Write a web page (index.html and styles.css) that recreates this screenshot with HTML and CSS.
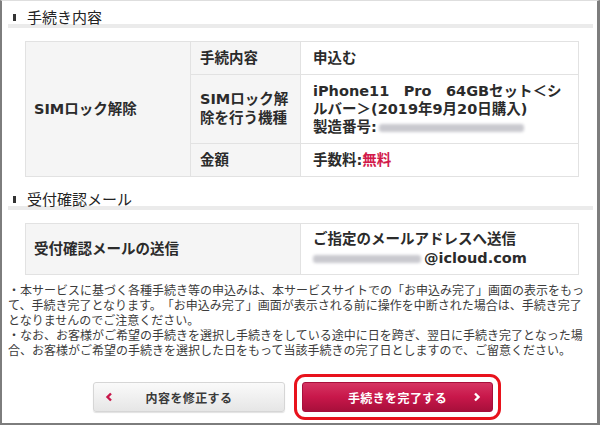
FILE: index.html
```html
<!DOCTYPE html>
<html lang="ja">
<head>
    <meta charset="UTF-8">
    <meta name="viewport" content="width=device-width, initial-scale=1.0">
    <title>手続き内容の確認</title>
    <link rel="stylesheet" href="styles.css">
</head>
<body>
    <div class="page">
        <h2 class="section-title">手続き内容</h2>
        <table class="detail-table">
            <colgroup>
                <col class="col-group">
                <col class="col-item">
                <col class="col-value">
            </colgroup>
            <tr class="row-short">
                <th class="group" rowspan="3">SIMロック解除</th>
                <th>手続内容</th>
                <td>申込む</td>
            </tr>
            <tr class="row-tall">
                <th>SIMロック解除を行う機種</th>
                <td>iPhone11　Pro　64GBセット＜シルバー＞(2019年9月20日購入)<br>製造番号:<span class="masked serial"></span></td>
            </tr>
            <tr class="row-short">
                <th>金額</th>
                <td>手数料:<span class="free">無料</span></td>
            </tr>
        </table>

        <h2 class="section-title">受付確認メール</h2>
        <table class="detail-table">
            <colgroup>
                <col class="col-wide">
                <col class="col-value">
            </colgroup>
            <tr class="row-mail">
                <th class="group">受付確認メールの送信</th>
                <td>ご指定のメールアドレスへ送信<br><span class="masked mail"></span>@icloud.com</td>
            </tr>
        </table>

        <div class="notes">
            <p>・本サービスに基づく各種手続き等の申込みは、本サービスサイトでの「お申込み完了」画面の表示をもって、手続き完了となります。「お申込み完了」画面が表示される前に操作を中断された場合は、手続き完了<span class="phrase">となりません</span>のでご注意ください。</p>
            <p>・なお、お客様がご希望の手続きを選択し手続きをしている途中に日を跨ぎ、翌日に手続き完了となった場合、お客様がご希望の手続きを選択した日をもって当該手続きの完了日としますので、ご留意ください。</p>
        </div>

        <div class="actions">
            <button class="btn btn-back" type="button">
                <svg class="chevron" width="8" height="10" viewBox="0 0 8 10"><path d="M6 1.5 L2.5 5 L6 8.5" fill="none" stroke="currentColor" stroke-width="2.4"/></svg>
                <span class="btn-label">内容を修正する</span>
                <span class="chevron-space"></span>
            </button>
            <button class="btn btn-submit" type="button">
                <span class="chevron-space"></span>
                <span class="btn-label">手続きを完了する</span>
                <svg class="chevron" width="8" height="10" viewBox="0 0 8 10"><path d="M2 1.5 L5.5 5 L2 8.5" fill="none" stroke="currentColor" stroke-width="2.4"/></svg>
            </button>
        </div>
    </div>
</body>
</html>
```

FILE: styles.css
```css
:root {
    --text: #2b2b2b;
    --text-note: #3c3c3c;
    --border: #e2e2e2;
    --cell-bg: #f5f5f5;
    --frame: #7d7d7d;
    --accent: #c8174a;
    --accent-dark: #a80f3b;
    --highlight: #e8121c;
}

* {
    box-sizing: border-box;
    margin: 0;
    padding: 0;
}

body {
    font-family: 'DejaVu Sans', 'Noto Sans CJK JP', sans-serif;
    color: var(--text);
    background-color: #ffffff;
}

.page {
    width: 600px;
    height: 425px;
    border-top: 1px solid #dedede;
    border-left: 2px solid var(--frame);
    border-right: 3px solid var(--frame);
    border-bottom: 2px solid var(--frame);
    padding: 0 4px 0 6px;
}

/* section headings */
.section-title {
    font-family: 'Noto Sans CJK JP', sans-serif;
    font-size: 15px;
    font-weight: 400;
    line-height: 14px;
    padding: 9px 0 0 5px;
    border-bottom: 4px solid #ebebeb;
    display: flex;
    align-items: center;
    color: #222222;
}

.section-title::before {
    content: '';
    width: 3px;
    height: 7px;
    background-color: #333333;
    margin-right: 11px;
}

.section-title + .detail-table {
    margin-top: 13px;
}

.detail-table + .section-title {
    margin-top: 6px;
}

/* tables */
.detail-table {
    margin-left: 17px;
    width: 553px;
    border-collapse: collapse;
    table-layout: fixed;
    font-size: 14.5px;
    font-weight: 700;
}

.col-group { width: 165px; }
.col-item { width: 110px; }
.col-wide { width: 275px; }
.col-value { width: 278px; }

.detail-table th,
.detail-table td {
    border: 1px solid var(--border);
    text-align: left;
    vertical-align: middle;
    line-height: 18px;
}

.detail-table th {
    background-color: var(--cell-bg);
    padding: 0 8px 0 9px;
    line-height: 19px;
}

.detail-table th.group {
    padding-left: 8px;
}

.detail-table td {
    padding: 0 10px 0 12px;
}

.row-short { height: 33px; }
.row-tall { height: 69px; }
.row-mail { height: 51px; }

.row-mail td {
    line-height: 19px;
}

.free {
    color: #d2194b;
}

.masked {
    display: inline-block;
    height: 8px;
    background-color: #c9c9cf;
    border-radius: 3px;
    filter: blur(1.6px);
    vertical-align: middle;
}

.masked.serial {
    width: 145px;
    margin-left: 2px;
}

.masked.mail {
    width: 108px;
    margin-right: 3px;
}

/* notes */
.notes {
    margin-top: 7px;
    margin-right: -5px;
    font-family: 'Noto Sans CJK JP', sans-serif;
    font-size: 12px;
    line-height: 15px;
    color: var(--text-note);
    text-spacing-trim: space-all;
    font-feature-settings: "chws" 0, "halt" 0;
}

.phrase {
    white-space: nowrap;
}

/* buttons */
.actions {
    display: flex;
    gap: 17px;
    margin-top: 25px;
    padding-left: 85px;
}

.btn {
    width: 192px;
    height: 30px;
    border-radius: 3px;
    display: flex;
    align-items: center;
    padding: 0 11px;
    font-family: 'Noto Sans CJK JP', sans-serif;
    font-size: 12px;
    font-weight: 700;
    letter-spacing: 0.4px;
    cursor: pointer;
}

.btn-label {
    flex: 1;
    text-align: center;
}

.chevron,
.chevron-space {
    width: 8px;
    flex: none;
}

.btn-back {
    border: 1px solid #d6d6d6;
    background: linear-gradient(#fafafa, #e6e6e6);
    color: #3a3a3a;
    box-shadow: 0 1px 1px rgba(0, 0, 0, 0.12);
}

.btn-back .chevron {
    color: var(--accent);
}

.btn-submit {
    width: 191px;
    border: 1px solid var(--accent-dark);
    background: linear-gradient(#d63462, var(--accent) 50%, var(--accent-dark));
    color: #ffffff;
    outline: 3px solid var(--highlight);
    outline-offset: 5px;
}
```
